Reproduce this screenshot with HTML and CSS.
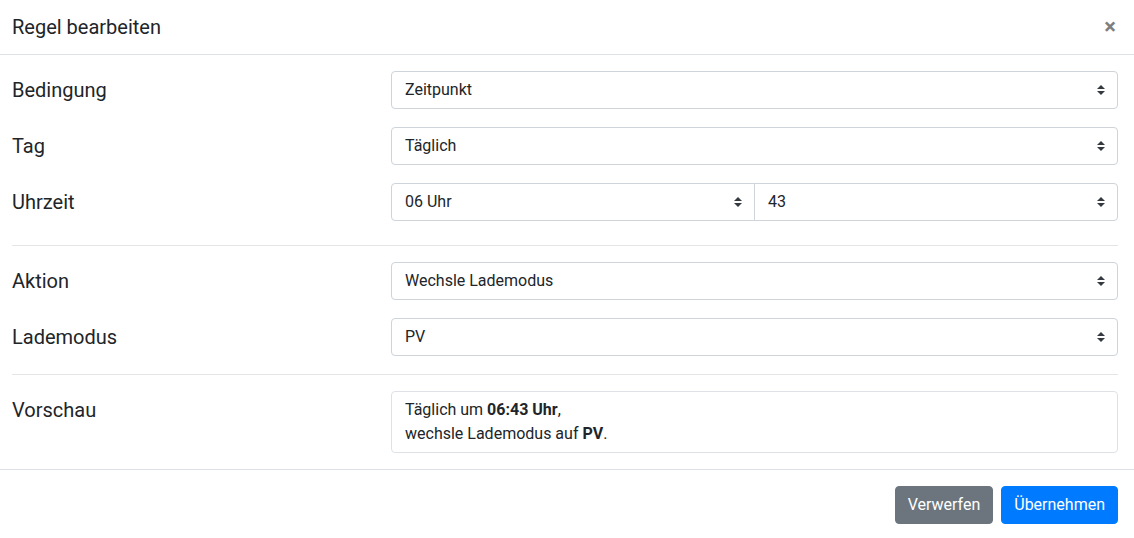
FILE: index.html
```html
<!DOCTYPE html>
<html lang="de">
<head>
<meta charset="utf-8">
<title>Regel bearbeiten</title>
<link rel="stylesheet" href="styles.css">
</head>
<body>
<div class="modal">
  <div class="modal-header">
    <h5 class="modal-title">Regel bearbeiten</h5>
    <button class="close" type="button">×</button>
  </div>
  <div class="modal-body">
    <div class="group">
      <div class="row">
        <label class="label">Bedingung</label>
        <div class="select"><span>Zeitpunkt</span><i class="arrow"></i></div>
      </div>
      <div class="row">
        <label class="label">Tag</label>
        <div class="select"><span>Täglich</span><i class="arrow"></i></div>
      </div>
      <div class="row">
        <label class="label">Uhrzeit</label>
        <div class="input-group">
          <div class="select first"><span>06 Uhr</span><i class="arrow"></i></div>
          <div class="select last"><span>43</span><i class="arrow"></i></div>
        </div>
      </div>
    </div>
    <hr class="sep sep-a">
    <div class="group">
      <div class="row">
        <label class="label">Aktion</label>
        <div class="select"><span>Wechsle Lademodus</span><i class="arrow"></i></div>
      </div>
      <div class="row">
        <label class="label">Lademodus</label>
        <div class="select"><span>PV</span><i class="arrow"></i></div>
      </div>
    </div>
    <hr class="sep sep-b">
    <div class="row row-top">
      <label class="label">Vorschau</label>
      <div class="preview">Täglich um <b>06:43 Uhr</b>,<br>wechsle Lademodus auf <b>PV</b>.</div>
    </div>
  </div>
  <div class="modal-footer">
    <button class="btn btn-secondary" type="button">Verwerfen</button>
    <button class="btn btn-primary" type="button">Übernehmen</button>
  </div>
</div>
</body>
</html>
```

FILE: styles.css
```css
* { box-sizing: border-box; }
html, body { margin: 0; padding: 0; background: #fff; }
body {
  font-family: Roboto, "Liberation Sans", Arial, sans-serif;
  color: #212529;
  font-size: 16px;
  line-height: 1.5;
  overflow: hidden;
}
.modal { width: 1134px; }
.modal-header {
  display: flex;
  align-items: center;
  justify-content: space-between;
  height: 55px;
  padding: 0 16px 0 12px;
  border-bottom: 1px solid #dee2e6;
}
.modal-title {
  margin: 0;
  font-size: 20px;
  font-weight: 400;
  line-height: 30px;
}
.close {
  background: none;
  border: 0;
  padding: 0;
  margin-right: 2px;
  font-family: inherit;
  font-size: 22px;
  font-weight: 700;
  line-height: 1;
  color: #000;
  opacity: .5;
  text-shadow: 0 1px 0 #fff;
}
.modal-body { padding: 16px 16px 16px 12px; }
.group { display: flex; flex-direction: column; gap: 18px; }
.row {
  display: grid;
  grid-template-columns: 379px 1fr;
  align-items: center;
}
.row-top { align-items: start; }
.label {
  font-size: 20px;
  line-height: 38px;
  height: 38px;
}
.select {
  display: flex;
  align-items: center;
  justify-content: space-between;
  height: 38px;
  padding: 0 12px 0 13px;
  border: 1px solid #ced4da;
  border-radius: 4px;
  background: #fff;
  font-size: 16px;
}
.arrow {
  display: block;
  width: 8px;
  height: 10px;
  background: url("data:image/svg+xml,%3csvg xmlns='http://www.w3.org/2000/svg' width='4' height='5' viewBox='0 0 4 5'%3e%3cpath fill='%23343a40' d='M2 0L0 2h4zm0 5L0 3h4z'/%3e%3c/svg%3e") no-repeat center / 8px 10px;
}
.input-group { display: flex; }
.input-group .select { flex: 1 1 0; }
.select.first { border-radius: 4px 0 0 4px; }
.select.last { border-radius: 0 4px 4px 0; margin-left: -1px; }
.sep {
  border: 0;
  border-top: 1px solid rgba(0,0,0,.1);
  margin: 0;
}
.sep-a { margin: 24px 0 16px; }
.sep-b { margin: 18px 0 16px; }
.preview {
  border: 1px solid #dee2e6;
  border-radius: 4px;
  padding: 6px 13px;
  font-size: 16px;
  line-height: 24px;
}
.preview b { font-weight: 700; }
.modal-footer {
  display: flex;
  justify-content: flex-end;
  gap: 8px;
  padding: 16px 16px 16px 12px;
  border-top: 1px solid #dee2e6;
}
.btn {
  font-family: inherit;
  font-size: 16px;
  line-height: 24px;
  padding: 6px 12px;
  border: 1px solid transparent;
  border-radius: 4px;
  color: #fff;
}
.btn-secondary { background: #6c757d; border-color: #6c757d; }
.btn-primary { background: #007bff; border-color: #007bff; }
```
